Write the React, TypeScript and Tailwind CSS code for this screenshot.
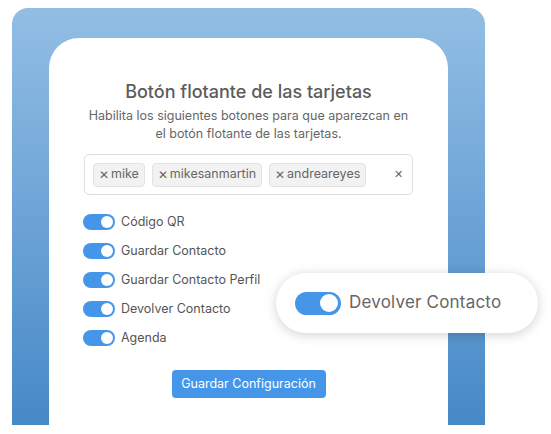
import React from "react";

function Toggle({ big = false }: { big?: boolean }) {
  if (big) {
    return (
      <div className="w-[46px] h-[23px] rounded-full bg-[#4596e8] flex items-center justify-end pr-[3px] shrink-0">
        <div className="w-[18px] h-[18px] rounded-full bg-white" />
      </div>
    );
  }
  return (
    <div className="w-[32px] h-[16px] rounded-full bg-[#4596e8] flex items-center justify-end pr-[2px] shrink-0">
      <div className="w-[12px] h-[12px] rounded-full bg-white" />
    </div>
  );
}

function Chip({ label }: { label: string }) {
  return (
    <div className="h-[24px] px-[5px] flex items-center gap-[2px] rounded-[4px] bg-[#f2f2f2] border border-[#e3e3e3] text-[12.5px] text-[#666]">
      <span className="text-[12px] leading-none">✕</span>
      <span>{label}</span>
    </div>
  );
}

export default function App() {
  const items = [
    "Código QR",
    "Guardar Contacto",
    "Guardar Contacto Perfil",
    "Devolver Contacto",
    "Agenda",
  ];
  return (
    <div
      className="relative w-[551px] h-[434px] overflow-hidden bg-white pt-[8px] pl-[12px]"
      style={{ fontFamily: "Inter, 'Noto Sans', sans-serif" }}
    >
      <div className="w-[473px] h-[417px] rounded-t-[16px] bg-gradient-to-b from-[#92bee4] to-[#4689c7] pt-[30px] px-[37px]">
        <div className="w-[399px] h-[400px] bg-white rounded-t-[30px] pt-[42px] px-[35px] flex flex-col">
          <h1 className="text-center text-[18px] leading-[24px] font-medium text-[#5c5c5c]">
            Botón flotante de las tarjetas
          </h1>
          <p className="mt-[3px] text-center text-[12.5px] leading-[18px] text-[#666]">
            Habilita los siguientes botones para que aparezcan en
            <br />
            el botón flotante de las tarjetas.
          </p>
          <div className="mt-[11px] h-[41px] border border-[#dedede] rounded-[5px] flex items-center pl-[8px] pr-[8px] gap-[7px]">
            <Chip label="mike" />
            <Chip label="mikesanmartin" />
            <Chip label="andreareyes" />
            <span className="ml-auto mr-[1px] text-[11px] text-[#666]">✕</span>
          </div>
          <div className="mt-[19px] flex flex-col gap-[13px]">
            {items.map((t) => (
              <div key={t} className="flex items-center gap-[6px] h-[16px] -ml-[1px]">
                <Toggle />
                <span className="text-[12.5px] text-[#555]">{t}</span>
              </div>
            ))}
          </div>
          <div className="mt-[24px] flex justify-center">
            <button className="h-[28px] w-[154px] rounded-[4px] bg-[#4596e8] text-white text-[12.5px]">
              Guardar Configuración
            </button>
          </div>
        </div>
      </div>
      <div className="absolute left-[276px] top-[273px] w-[262px] h-[60px] rounded-full bg-white shadow-[0_2px_12px_rgba(0,0,0,0.18)] flex items-center pl-[19px] gap-[8px]">
        <Toggle big />
        <span className="text-[17px] tracking-[0.2px] text-[#666]">Devolver Contacto</span>
      </div>
    </div>
  );
}
